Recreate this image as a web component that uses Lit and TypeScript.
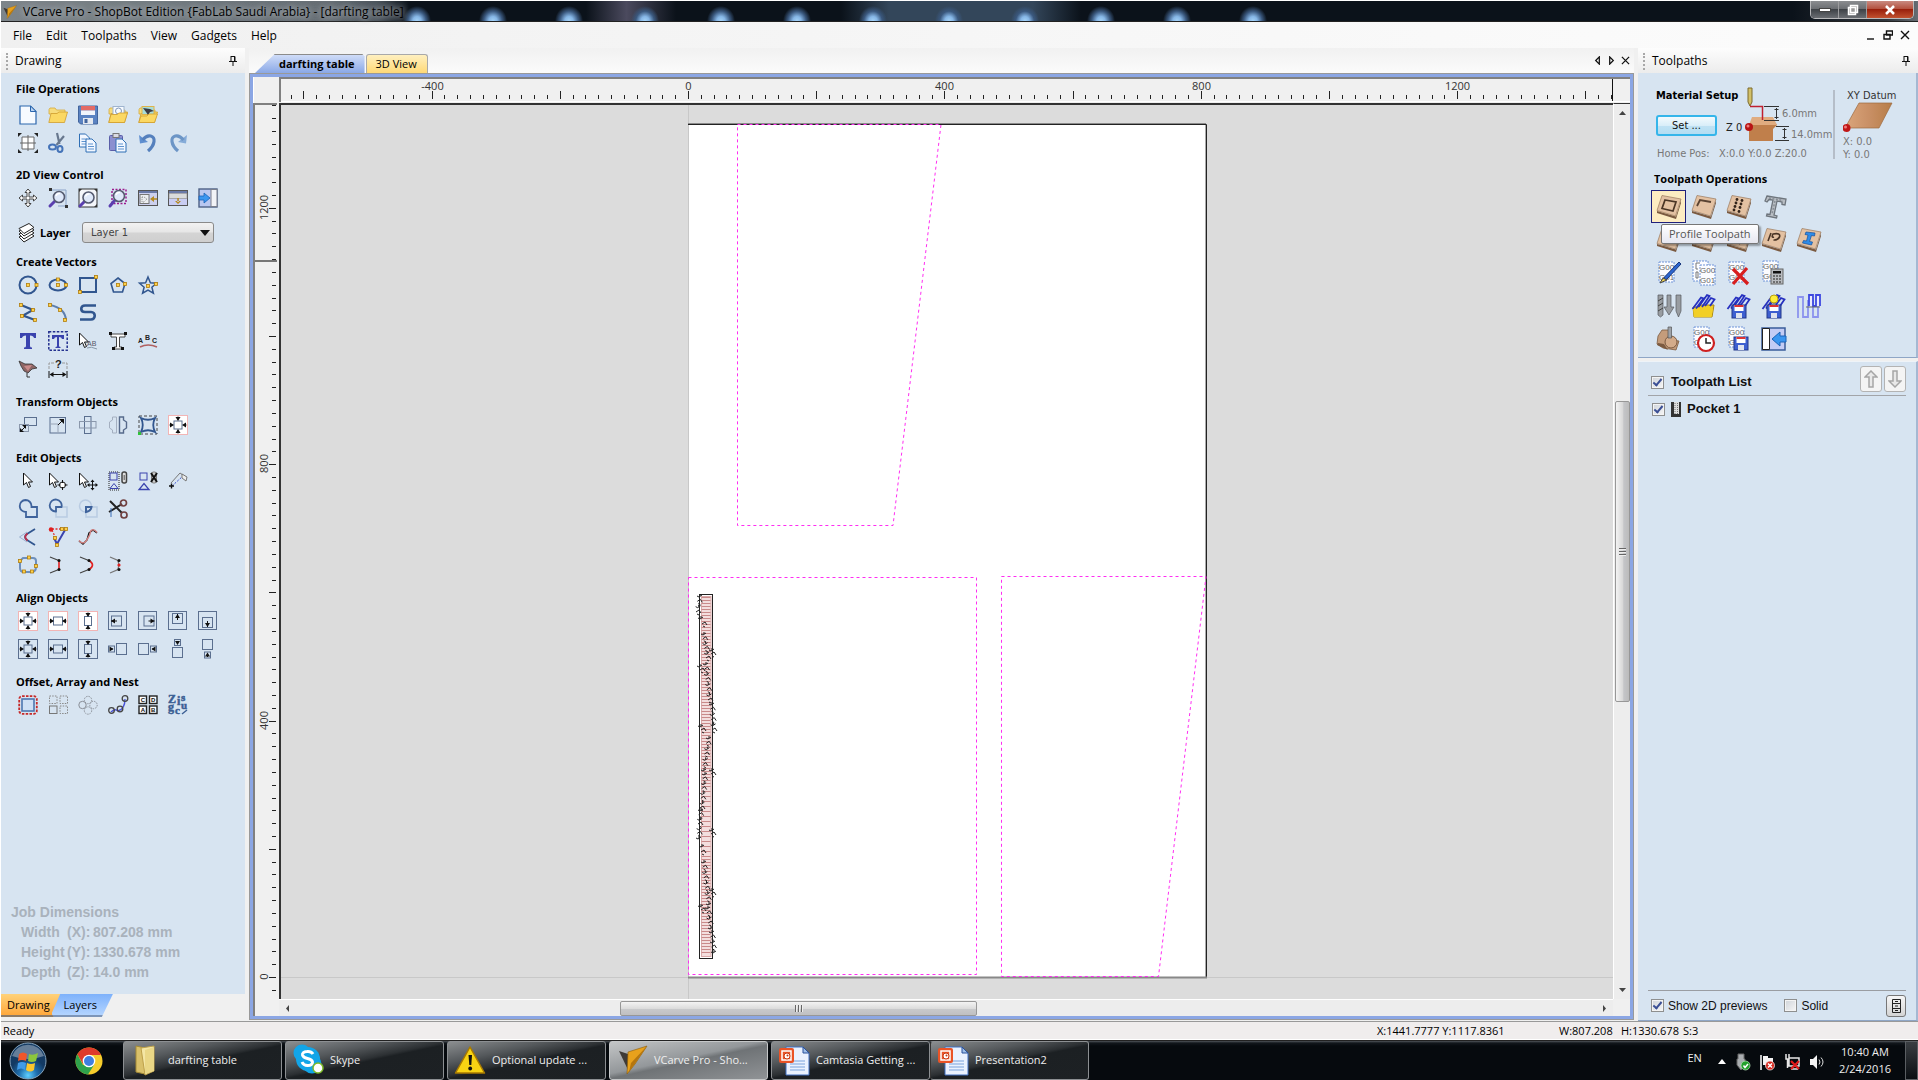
import { LitElement, html, svg, css, TemplateResult } from "lit";
import { customElement, property } from "lit/decorators.js";

type Shape = TemplateResult<2>;

/* ---------- shared drawing helpers ---------- */

const handle = (x: number, y: number): Shape =>
  svg`<rect x=${x - 1.5} y=${y - 1.5} width="3" height="3" fill="#ffd24a" stroke="#b07d10" stroke-width="0.8"/>`;

const box = (x: number, y: number, w: number, h: number, stroke = "#5b6f8f", fill = "none"): Shape =>
  svg`<rect x=${x} y=${y} width=${w} height=${h} fill=${fill} stroke=${stroke}/>`;

const head = (x: number, y: number, dir: string): Shape => {
  const d: Record<string, string> = {
    l: "l4 -2.5 v5z",
    r: "l-4 -2.5 v5z",
    u: "l-2.5 4 h5z",
    d: "l-2.5 -4 h5z",
  };
  return svg`<path d=${`M${x} ${y}${d[dir]}`} fill="#111"/>`;
};

const pointer: Shape = svg`<path d="M1.500 2v12l3-2.500 2 5 2-1-2-4.500h4z" fill="#fff" stroke="#111"/>`;

const lens = (x = 11, y = 8): Shape => svg`
  <path d=${`M${x - 4} ${y + 4}L2 18`} stroke="#5a3fb0" stroke-width="3" stroke-linecap="round"/>
  <circle cx=${x} cy=${y} r="5.500" fill="#dfe9fa" stroke="#555b70" stroke-width="1.600"/>
  <path d=${`M${x - 3} ${y - 1}a3.500 3.500 0 0 1 4-2.500`} stroke="#fff" stroke-width="1.500" fill="none"/>`;

const folder: Shape = svg`
  <path d="M1 4.500l1-1.500h5l1.500 2H17v4H1z" fill="#f7dc7c" stroke="#d6a93c" stroke-width="0.800"/>
  <path d="M0.800 17.500L3 8.500h6L11 7h8.500L16.500 17.500z" fill="#fbd863" stroke="#d09e2e" stroke-width="0.800"/>`;

const page = (x: number, y: number): Shape => svg`
  <path d=${`M${x} ${y}h6l4 4v9h-10z`} fill="#f2f7ff" stroke="#2f6fb5"/>
  <path d=${`M${x + 2} ${y + 5}h5m-5 2.500h6m-6 2.500h6`} stroke="#5f93cf"/>`;

const center = (fill: string, stroke: string, h: boolean, v: boolean): Shape => svg`
  ${box(0.5, 0.5, 19, 19, stroke, fill)}
  ${h && v ? box(6, 6, 8, 8) : h ? box(5.500, 6, 9, 8) : box(6.500, 5.500, 7, 9)}
  ${h ? svg`<path d="M1.500 10h3M15.500 10h3" stroke="#111"/>${head(6, 10, "r")}${head(14, 10, "l")}` : ""}
  ${v ? svg`<path d="M10 1.500v3M10 15.500v3" stroke="#111"/>${head(10, 6, "d")}${head(10, 14, "u")}` : ""}`;

const arrowGlyph = (x: number, y: number, dx: number, dy: number): Shape => {
  const d = dx < 0 ? "l" : dx > 0 ? "r" : dy < 0 ? "u" : "d";
  return svg`<path d=${`M${x} ${y}l${-dx * 6} ${-dy * 6}`} stroke="#111"/>${head(x, y, d)}`;
};

/* ---------- drawing panel icons, 20 x 20 ---------- */

const B = "#31568f";

const drawingIcons: Record<string, Shape> = {
  "New file": svg`<path d="M2 1h10.500L18 6.500V19H2z" fill="#f6faff" stroke="#2b66ad" stroke-width="1.200"/><path d="M12.500 1v5.500H18z" fill="#b9d3f2" stroke="#2b66ad"/>`,
  "Open file": folder,
  "Save file": svg`<path d="M0.500 1h19v18h-17l-2-2z" fill="#5b83c2" stroke="#42659d"/><rect x="3" y="1" width="14" height="4.500" fill="#e36b66"/><rect x="3" y="5.500" width="14" height="4.500" fill="#f2f5fb"/><rect x="5" y="13" width="10" height="6" fill="#e5e9f0"/><rect x="6.500" y="14" width="3" height="4" fill="#42659d"/>`,
  "Import vectors": svg`${folder}<rect x="5" y="1.500" width="11" height="8" fill="#f7fbff" stroke="#9fb4cf"/><circle cx="10.500" cy="6" r="3" fill="none" stroke="#8297b8"/><path d="M0.800 17.500L3 9.500h6L11 8h8.500L16.500 17.500z" fill="#fbd863" stroke="#d09e2e" stroke-width="0.800"/>`,
  "Import bitmap": svg`${folder}<rect x="4" y="1.500" width="12" height="8" fill="#a8dcd8" stroke="#e0b44a"/><path d="M5 3l7 1 4 2-4 1-2 3-2-3z" fill="#3b3b45"/><path d="M0.800 17.500L3 11h6l2-2h8.500L16.500 17.500z" fill="#fbd863" stroke="#d09e2e" stroke-width="0.800"/>`,
  "Job setup": svg`<rect x="4" y="4" width="12" height="12" fill="#fff"/><path d="M10 2v16M2 10h16M4 4h12v12H4z" stroke="#666" fill="none"/><path d="M0 0h4L0 4zM20 0h-4l4 4zM0 20h4l-4-4zM20 20h-4l4-4z" fill="#222"/>`,
  Cut: svg`<path d="M9 0l2.500 11M16 3L8.500 12" stroke="#68788f" stroke-width="2.200"/><ellipse cx="4.500" cy="14" rx="3.500" ry="2.500" fill="none" stroke="#4473b8" stroke-width="2"/><ellipse cx="12" cy="16" rx="2.500" ry="3" fill="none" stroke="#4473b8" stroke-width="2"/>`,
  Copy: svg`${page(1.5, 1)}${page(8, 6)}`,
  Paste: svg`<rect x="1.500" y="2.500" width="13" height="15" rx="1" fill="#8b8fd0" stroke="#5a5ea8"/><rect x="5" y="0.500" width="6" height="4" fill="#d9dae2" stroke="#777"/>${page(8, 6)}`,
  Undo: svg`<path d="M1 2l1 8.500 8-1.500z" fill="#5f8fd0"/><path d="M4.500 7C10 0 17 3 16 8.500c-.5 4-3 7-6 9.500" fill="none" stroke="#5580bd" stroke-width="3.200"/>`,
  Redo: svg`<path d="M19 2l-1 8.500-8-1.500z" fill="#85abd8"/><path d="M15.500 7C10 0 3 3 4 8.500c.5 4 3 7 6 9.500" fill="none" stroke="#6c95c6" stroke-width="3.200"/>`,
  Pan: svg`<path d="M10 1l3 3.500h-2v4.500h4.500V7L19 10l-3.500 3v-2H11v4.500h2L10 19l-3-3.500h2V11H4.500v2L1 10l3.500-3v2H9V4.500H7z" fill="#fff" stroke="#444"/>`,
  "Zoom box": svg`<path d="M3 2h15v16H10" fill="none" stroke="#8aa3c8"/><path d="M1 0h3v3H1zM17 17h3v3h-3z" fill="#333"/>${lens(11, 9)}`,
  "Zoom all": svg`<rect x="1" y="1" width="18" height="18" fill="#f4f6fa" stroke="#333"/>${lens(10.500, 9.500)}<path d="M1 1h3L1 4zM19 1h-3l3 3zM19 19h-3l3-3z" fill="#333"/>`,
  "Zoom selection": svg`<rect x="4" y="1.500" width="14" height="14" fill="none" stroke="#9b1c8e" stroke-width="1.500" stroke-dasharray="2 1.500"/>${lens(11, 8)}`,
  "Tile horizontally": svg`<rect x="0.500" y="2.500" width="19" height="15" fill="#ccd0ee" stroke="#555"/><rect x="1" y="3" width="18" height="2" fill="#6a7aa8"/><rect x="2" y="6.500" width="9" height="9" fill="#eceef0" stroke="#777"/><path d="M4 9h2l3 2-3 3H4z" fill="none" stroke="#888" stroke-dasharray="1 1"/><path d="M12 11l4-3v6zM15 10.300h4v1.500h-4z" fill="#b58a1e"/>`,
  "Tile vertically": svg`<rect x="0.500" y="2.500" width="19" height="15" fill="#c9cdf2" stroke="#555"/><rect x="1" y="3" width="18" height="2" fill="#6a7aa8"/><rect x="1" y="5.500" width="18" height="5" fill="#d9dbdc" stroke="#888" stroke-width="0.600"/><path d="M10 16l3-3H7zM9.300 10h1.500v4H9.300z" fill="#b58a1e"/>`,
  "Switch panels": svg`<rect x="1" y="1" width="18" height="18" fill="#b9c7f0" stroke="#4e6186" stroke-width="1.400"/><rect x="13" y="1.500" width="6" height="17" fill="#f2f3f7" stroke="#7a7f8c"/><path d="M1 8h5V5l6 5-6 5v-3H1z" fill="#3a96f0" stroke="#1a62b8" stroke-width="0.800"/>`,

  Circle: svg`<circle cx="10" cy="10" r="8.500" fill="none" stroke=${B} stroke-width="2"/>${handle(10, 10)}${handle(18.500, 10)}`,
  Ellipse: svg`<ellipse cx="10" cy="10" rx="8.500" ry="5.500" fill="none" stroke=${B} stroke-width="2"/>${handle(10, 10)}${handle(10, 4.500)}${handle(18, 10)}`,
  Rectangle: svg`<rect x="2" y="3" width="16" height="14" fill="none" stroke=${B} stroke-width="2"/>${handle(18, 2)}${handle(2, 17)}`,
  Polygon: svg`<path d="M10 3l7 5.500L14.500 17h-9L3 8.500z" fill="none" stroke=${B} stroke-width="1.600"/>${handle(10, 10)}${handle(17, 9)}`,
  Star: svg`<path d="M10 2l2.400 5.700 6.100.500-4.600 4 1.500 6L10 15l-5.400 3.200 1.500-6-4.600-4 6.100-.500z" fill="none" stroke=${B} stroke-width="1.500"/>${handle(10, 11)}${handle(18, 9)}`,
  Polyline: svg`<path d="M3 2l12 5L5 12.500 17 17" fill="none" stroke=${B} stroke-width="2.200"/>${handle(3, 2)}${handle(15, 7)}${handle(4, 13)}${handle(17, 17)}`,
  Arc: svg`<path d="M2 2q15 3 16 15" fill="none" stroke="#5d7fae" stroke-width="2"/>${handle(2, 2)}${handle(12, 7)}${handle(17, 17)}`,
  "Draw curve": svg`<path d="M18 2.500H7c-5 0-5 6.500 0 6.500h6c5 0 5 7.500 0 7.500H2" fill="none" stroke=${B} stroke-width="2.600"/>`,
  "Draw text": svg`<path d="M2 2h16v5h-2q-.5-2.500-4-2.500V15q0 1.500 2 1.500V18H6v-1.500q2 0 2-1.500V4.500Q4.500 4.500 4 7H2z" fill="#3a43ae"/>`,
  "Text in box": svg`<rect x="0.800" y="0.800" width="18.400" height="18.400" fill="none" stroke="#24318f" stroke-width="1.500" stroke-dasharray="2.500 1.500"/><path d="M4 4h12v4h-2q-.3-2-3-2v9q0 1 1.500 1v1h-5v-1Q9 16 9 15V6Q6.300 6 6 8H4z" fill="#3a43ae"/>`,
  "Edit text": svg`${pointer}<text x="9" y="15" font-size="7" fill="#556" font-family="Liberation Sans">AB</text><path d="M9 17q4-2 10 1" stroke="#89a" fill="none"/>`,
  "Convert text": svg`<path d="M3 3h14v3h-5.500v10H14v2H6v-2h2.500V6H3z" fill="#fff" stroke="#444"/><path d="M1 1h3v3H1zM16 1h3v3h-3zM4 16h3v3H4zM13 16h3v3h-3z" fill="#111"/>`,
  "Text on curve": svg`<g font-family="Liberation Sans" font-weight="700" font-size="7" fill="#222"><text x="0" y="12">A</text><text x="7" y="9">B</text><text x="14" y="12">C</text></g><path d="M2 16q8-4 17 0" fill="none" stroke="#b06060" stroke-width="1.500"/>`,
  "Trace bitmap": svg`<path d="M1 2l6 3h7l5 4-5 1-4 4-4-2-3-5z" fill="#8d6565" stroke="#333" stroke-width="0.800"/><path d="M6 7l8-1-4 6z" fill="#c98a8a"/><path d="M9 14v4m0 0h3" stroke="#333"/>`,
  Dimension: svg`<path d="M1 10V4h5M14 4h5v6" fill="none" stroke="#999" stroke-dasharray="3 1"/><text x="7" y="9" font-size="11" font-weight="700" font-family="Liberation Sans" fill="#222">?</text><path d="M1 12v7M19 12v7M3 15.500h14" stroke="#111"/>${head(1.500, 15.500, "l")}${head(18.500, 15.500, "r")}`,

  Move: svg`${box(6.5, 2.5, 12, 8)}<rect x="1.500" y="9.500" width="9" height="7" fill="none" stroke="#8a97ab"/><path d="M3 16l5-5" stroke="#111"/><path d="M8 10v4l-4-4zM2 17v-4l4 4z" fill="#111"/>`,
  Scale: svg`${box(2, 2.5, 15.5, 15.5)}<path d="M2 9h8v9" fill="none" stroke="#9aa6b8"/><path d="M10 10l5-5" stroke="#111"/><path d="M16 4v5l-5-5z" fill="#111"/>`,
  Rotate: svg`${box(6.5, 1.5, 6.500, 17)}<rect x="1.500" y="6.500" width="16.500" height="6.500" fill="none" stroke="#8a97ab"/>`,
  Mirror: svg`<path d="M8.500 2v16h-4v-3L1.500 13V7l3-2V2z" fill="none" stroke="#a4afc0"/><path d="M11.500 2v16h4v-3l3-2V7l-3-2V2z" fill="none" stroke="#56698a" stroke-width="1.400"/>`,
  Distort: svg`<path d="M1 1h18v18H1z" fill="none" stroke="#444" stroke-dasharray="3 2"/><path d="M3 3q7 3.500 14 0-3.500 7 0 14-7-3.500-14 0 3.500-7 0-14z" fill="none" stroke=${B} stroke-width="1.800"/><rect x="0" y="17" width="3" height="3" fill="#2fc23a"/>`,
  "Align centre": center("#fff", "#f2b5b5", true, true),

  Select: svg`<g transform="translate(4 0)">${pointer}</g>`,
  "Node edit": svg`${pointer}<circle cx="14.500" cy="14" r="3" fill="#fff" stroke="#111"/><path d="M14.500 9v3m0 4v3M9.500 14h3m4 0h3" stroke="#111"/>`,
  "Transform mode": svg`${pointer}<path d="M14.500 9.500v9M10 14h9" stroke="#111"/><path d="M14.500 8.500l2 2.500h-4zM14.500 19.500l2-2.500h-4zM9 14l2.500-2v4zM20 14l-2.500-2v4z" fill="#111"/>`,
  Group: svg`<rect x="1" y="1" width="10" height="18" fill="none" stroke="#222" stroke-dasharray="1 1"/>${box(2, 2, 7, 7, "#3a43ae")}<path d="M2 17.500h8l-4-5z" fill="none" stroke="#3a43ae"/><rect x="14" y="1" width="4.500" height="11" rx="2" fill="#ddd" stroke="#444" stroke-width="1.500"/><path d="M16.200 4v5" stroke="#555"/>`,
  Ungroup: svg`${box(2, 2, 7, 7, "#3a43ae")}<path d="M1 18.500h10l-5-6z" fill="none" stroke="#3a43ae" stroke-width="1.300"/><rect x="13.500" y="1" width="5" height="11" rx="2" fill="#ccc" stroke="#777"/><path d="M13 2l6 9M19 2l-6 9" stroke="#111" stroke-width="2"/>`,
  Measure: svg`<path d="M3 12l9-10 6 4" fill="none" stroke="#777"/><path d="M4 15L15 5" stroke="#3a4fd0" stroke-dasharray="2 1.500"/><path d="M1 15h5M3.500 12.500v5" stroke="#111" stroke-width="1.400"/><path d="M14 3l5 3-1 4-4-3z" fill="#eee" stroke="#777"/>`,
  Weld: svg`<path d="M7.500 1a6 6 0 0 1 6 6v1h5.500v10H8v-5A6 6 0 1 1 7.500 1z" fill="none" stroke="#3f639c" stroke-width="1.800"/>`,
  Subtract: svg`<rect x="8" y="8" width="11" height="10" fill="none" stroke="#b9cbe2" stroke-width="1.500"/><path d="M8 12.500A6 6 0 1 1 13.500 8H8z" fill="none" stroke="#3f639c" stroke-width="1.800"/>`,
  Intersect: svg`<circle cx="7.500" cy="7" r="6" fill="none" stroke="#b9cbe2" stroke-width="1.500"/><rect x="8" y="8" width="11" height="10" fill="none" stroke="#b9cbe2" stroke-width="1.500"/><path d="M8 8h5.500Q13 12 8 13z" fill="none" stroke="#3f639c" stroke-width="2"/>`,
  Trim: svg`<path d="M2 2l12 12M1 13l13-8" stroke="#222" stroke-width="2"/><circle cx="15.500" cy="4" r="3" fill="none" stroke="#704040" stroke-width="1.700"/><circle cx="16" cy="16" r="3" fill="none" stroke="#704040" stroke-width="1.700"/><path d="M3 9v9" stroke="#3a6fb8"/>`,
  Fillet: svg`<path d="M9 5L1.500 10 9 15" fill="none" stroke="#9bb0cf"/><path d="M17 2L9 7q-4 3 0 6l8 5" fill="none" stroke=${B} stroke-width="1.800"/><path d="M9.500 6.500q-4.500 3.500 0 7" fill="none" stroke="#c0304a" stroke-width="1.800"/>`,
  Extend: svg`<path d="M4 2h12M4 3l4 9" fill="none" stroke="#e03030" stroke-dasharray="2 1.500" stroke-width="1.300"/><path d="M17 3L9 17l-3-6" fill="none" stroke="#3a43ae" stroke-width="2"/><circle cx="3" cy="2.500" r="2.200" fill="#e02020"/>${handle(14, 2)}${handle(18, 2)}${handle(7, 11)}${handle(9, 18)}`,
  "Fit curves": svg`<path d="M1 14l4 3 4-4 2-7 4-3 4 3" fill="none" stroke="#111" stroke-width="1.400"/><path d="M1 13.500q4 5 7.500 0T13 3.500q3-2 6 2" fill="none" stroke="#d08080" stroke-width="1.400"/>`,
  "Close vector": svg`<path d="M5 3h10q3 0 3 3v6q0 5-5 5H6q-4 0-4-4V6z" fill="none" stroke="#6e90bd" stroke-width="2"/>${handle(2, 6)}${handle(11, 2.500)}${handle(18, 11)}${handle(6, 16.500)}${handle(14, 16.500)}`,
  "Join line": svg`<path d="M2 2l10 4M2 18l10-4" stroke="#444" stroke-width="1.300"/><path d="M11 6v8" stroke="#e02020" stroke-width="1.600"/><circle cx="11" cy="5.500" r="1.500" fill="#111"/><circle cx="11" cy="14.500" r="1.500" fill="#111"/>`,
  "Join curve": svg`<path d="M2 2l10 4M2 18l10-4" stroke="#444" stroke-width="1.300"/><path d="M11 5.500q7 4.500 0 9" fill="none" stroke="#e02020" stroke-width="1.600"/><circle cx="11" cy="5.500" r="1.500" fill="#111"/><circle cx="11" cy="14.500" r="1.500" fill="#111"/>`,
  "Join point": svg`<path d="M2 2l8 3.500 1 4.500-1 4.500L2 18" stroke="#777" fill="none" stroke-width="1.300"/><circle cx="11" cy="5.500" r="1.500" fill="#111"/><circle cx="11" cy="10" r="1.600" fill="#e02020"/><circle cx="11" cy="14.500" r="1.500" fill="#111"/>`,

  "Centre in material": center("#fff", "#f2b5b5", true, true),
  "Centre across": center("#fff", "#f2b5b5", true, false),
  "Centre up": center("#fff", "#f2b5b5", false, true),
  "Align left inside": svg`${box(0.5, 0.5, 18, 18)}${box(3.500, 5, 10, 10)}${arrowGlyph(3, 10, -1, 0)}`,
  "Align right inside": svg`${box(0.5, 0.5, 18, 18)}${box(6, 5, 10, 10)}${arrowGlyph(16.500, 10, 1, 0)}`,
  "Align top inside": svg`${box(0.5, 0.5, 18, 18)}${box(4.500, 2.500, 10, 10)}${arrowGlyph(9.500, 3, 0, -1)}`,
  "Align bottom inside": svg`${box(0.5, 0.5, 18, 18)}${box(4.500, 6.500, 10, 10)}${arrowGlyph(9.500, 16, 0, 1)}`,
  "Centre on selection": center("none", "#5b6f8f", true, true),
  "Centre across selection": center("none", "#5b6f8f", true, false),
  "Centre up selection": center("none", "#5b6f8f", false, true),
  "Align outside left": svg`${box(0.5, 7, 6, 6)}${box(8.500, 4.500, 10, 11)}<path d="M2 10h3" stroke="#111"/>${head(5.500, 10, "r")}`,
  "Align outside right": svg`${box(12.500, 7, 6, 6)}${box(0.5, 4.500, 10, 11)}<path d="M14 10h3" stroke="#111"/>${head(13.500, 10, "l")}`,
  "Align outside top": svg`${box(6.500, 0.500, 6, 6)}${box(4.500, 8.500, 10, 10)}<path d="M9.500 2v3" stroke="#111"/>${head(9.500, 6, "d")}`,
  "Align outside bottom": svg`${box(6.500, 13, 6, 6)}${box(4.500, 0.500, 10, 10)}<path d="M9.500 15v3" stroke="#111"/>${head(9.500, 13.500, "u")}`,

  Offset: svg`<rect x="1.200" y="1.200" width="17.600" height="17.600" rx="3" fill="none" stroke="#c62828" stroke-width="1.800" stroke-dasharray="2.500 1.300"/><rect x="4" y="4" width="12" height="12" fill="#cfe0f5" stroke="#4d76b0" stroke-width="1.600"/>`,
  "Array copy": svg`<g fill="none" stroke="#888" stroke-dasharray="1.500 1.200"><rect x="1.500" y="1" width="7.500" height="7.500"/><rect x="12" y="1" width="7.500" height="7.500"/><rect x="12" y="11" width="7.500" height="7.500"/></g>${box(1.500, 11, 7.500, 7.500, "#777")}`,
  "Circular copy": svg`<circle cx="4.500" cy="10" r="3.700" fill="none" stroke="#8a8f98"/><g fill="none" stroke="#8a8f98" stroke-dasharray="1.500 1"><circle cx="10" cy="5" r="3.700"/><circle cx="15.500" cy="10" r="3.700"/><circle cx="10" cy="15.500" r="3.700"/></g>`,
  "Copy along vector": svg`<path d="M3 17q4-4 7-1 7-2 7-12" fill="none" stroke="#4a52d8" stroke-width="1.400"/><g fill="none" stroke="#444" stroke-width="1.300"><circle cx="3.500" cy="15.500" r="2.800"/><circle cx="12" cy="14" r="2.800"/><circle cx="17" cy="3.500" r="2.800"/></g>`,
  "Plate layout": svg`<g fill="#fff" stroke="#222" stroke-width="1.400"><rect x="1" y="1" width="7.500" height="7.500"/><rect x="11.500" y="1" width="7.500" height="7.500"/><rect x="1" y="11" width="7.500" height="7.500"/><rect x="11.500" y="11" width="7.500" height="7.500"/></g><g font-size="6" font-weight="700" font-family="Liberation Sans" fill="#111"><text x="2.700" y="7">C</text><text x="13" y="7">D</text><text x="2.700" y="17">A</text><text x="13" y="17">B</text></g>`,
  Nest: svg`<g font-weight="700" font-family="Liberation Serif" fill="#3c5f94" stroke="#3c5f94" stroke-width="0.500"><text x="0" y="8" font-size="12">Z</text><text x="9" y="10" font-size="12">i</text><text x="0" y="16" font-size="12">g</text><text x="7" y="19" font-size="11">c</text><text x="13" y="6" font-size="11">s</text><text x="13" y="14" font-size="11">u</text></g><path d="M14 19l5-4" stroke="#3c5f94" stroke-width="1.500"/>`,
};

/* ---------- toolpath icons, 26 x 26 ---------- */

const plate: Shape = svg`
  <path d="M1 17l19 5.500L25 6v3L20 25 1 19z" fill="#7b5a40"/>
  <path d="M6 1.500L25 5 19.500 22 1 16.500z" fill="#e3c1a2" stroke="#9a795c" stroke-width="0.700"/>`;

const blankSheet = (x: number, y: number): Shape =>
  svg`<rect x=${x} y=${y} width="15" height="20" fill="#fbfcff" stroke="#6f93d8" stroke-dasharray="2 1"/>`;

const sheet = (x: number, y: number): Shape => svg`
  ${blankSheet(x, y)}
  <g font-size="8" fill="#666" font-family="Liberation Sans"><text x=${x} y=${y + 8}>G00</text><text x=${x} y=${y + 18}>G01</text></g>`;

const disk = (x: number, y: number): Shape => svg`
  <rect x=${x} y=${y} width="14" height="13" fill="#3e5fd0" stroke="#22368a"/>
  <rect x=${x + 2.5} y=${y} width="9" height="6" fill="#fff"/><rect x=${x + 2.5} y=${y} width="9" height="2" fill="#d33"/>
  <rect x=${x + 4} y=${y + 8} width="6" height="5" fill="#dfe3ee"/>`;

const coil: Shape = svg`<path d="M1.500 16L10 4.500l2.500 1L5 15.500M7.500 14L16 2l2.500 1-7.500 11M14 13l6-8 3.500 1.500L19 13" fill="none" stroke="#2630c0" stroke-width="1.800"/>`;

const toolIcons: Record<string, Shape> = {
  "Profile Toolpath": svg`${plate}<path d="M9 6l11 2-3 9-11-2.500z" fill="none" stroke="#4a3526" stroke-width="1.700"/>`,
  "Pocket Toolpath": svg`${plate}<path d="M6 12l3-6 11 2" fill="none" stroke="#5a4332" stroke-width="1.800"/>`,
  "Drilling Toolpath": svg`${plate}<g fill="#33241a"><circle cx="11" cy="5.500" r="1.400"/><circle cx="16" cy="6.500" r="1.400"/><circle cx="10" cy="9" r="1.400"/><circle cx="15" cy="10" r="1.400"/><circle cx="9" cy="12.500" r="1.400"/><circle cx="14" cy="13.500" r="1.400"/><circle cx="8" cy="16" r="1.400"/><circle cx="13" cy="17.500" r="1.400"/></g>`,
  "Quick Engrave": svg`<path d="M6 2l19 3-1 6-3-.500v-2.500l-5-1-3 14 3 1-.500 2-10-2 .500-2 3 .500L12 6 8 5.500 6 8 4 7z" fill="#b9bec4" stroke="#6e757d" stroke-width="1.300"/><path d="M8 4l14 2.500M14 7l-3 13" stroke="#868d95" stroke-dasharray="2 1.500" stroke-width="1.500"/>`,
  "Inlay Toolpath": svg`${plate}`,
  "V-Carve Toolpath": svg`${plate}<path d="M6 14l6-7 6 9" fill="none" stroke="#4a3526" stroke-width="2"/>`,
  "Fluting Toolpath": svg`${plate}<path d="M8 15l4-9M13 17l4-9" stroke="#4a3526" stroke-width="2"/>`,
  "Texture Toolpath": svg`${plate}<path d="M7 14l3-8M13 10q-3 1-1-3 8-1.500 6.500 3-2 3.500-6 3" fill="none" stroke="#4a3526" stroke-width="1.600"/>`,
  "Prism Carving": svg`${plate}<path d="M10 5l9 1-.500 3-3-.500-2 6 3 .500-1 3-9-2 1-2.500 3 .500 1.500-6-3-.500z" fill="#2e8be8" stroke="#15509c" stroke-width="0.700"/>`,
  "Edit Toolpath": svg`${sheet(3, 2)}<path d="M23 2l2 2L11 19l-4 2 1.500-4z" fill="#2c66d0" stroke="#17357c"/><path d="M4 23l3-5 4 2z" fill="#e8cf53" stroke="#444"/>`,
  "Duplicate Toolpath": svg`${blankSheet(2, 1)}<path d="M9 3H5v6h2M5 12h2v6H5z" stroke="#777" fill="none"/>${sheet(9, 5)}`,
  "Delete Toolpath": svg`${sheet(3, 2)}<path d="M7 9l15 15M21 8L7 24" stroke="#d81e1e" stroke-width="3.200"/>`,
  "Recalculate Toolpaths": svg`${sheet(2, 1)}<rect x="10" y="9" width="12" height="15" fill="#b9bcc0" stroke="#666"/><rect x="12" y="11" width="8" height="2.500" fill="#111"/><path d="M12 16h8M12 19h8M12 22h8" stroke="#555" stroke-width="1.500" stroke-dasharray="2 1"/>`,
  "Tool Database": svg`<g fill="#999da2" stroke="#55585d" stroke-width="0.700"><path d="M2 2h5v20l-2.500 2L2 22zM11 2h4v12h3l-5 8-5-8h3zM20 2h5v16l-2.500 6-2.500-6z"/></g><path d="M2 8l5-3M2 13l5-3M2 18l5-3" stroke="#444"/>`,
  "Load Template": svg`<path d="M2 14h6l2-2h13l-2 12H3z" fill="#f2cf26" stroke="#a98710"/>${coil}<path d="M2 16h20l-1.500 8H3z" fill="#f2cf26"/>`,
  "Save Template": svg`${coil}${disk(6, 12)}`,
  "Save Visible Template": svg`${coil}${disk(6, 12)}<circle cx="13" cy="6" r="4" fill="#ffee3a" stroke="#b8a010"/><path d="M11.500 10h3v2h-3z" fill="#888"/>`,
  "Merge Toolpaths": svg`<path d="M2 25V4h5v20h5V8h5v16h5V10" fill="none" stroke="#8c93ee" stroke-width="1.800"/><path d="M13 13V2h4v11h3V2h4v11" fill="#e9eafd" stroke="#3d47e0" stroke-width="1.800"/><path d="M10 14h14" stroke="#666"/>`,
  "Preview Toolpaths": svg`<path d="M2 10l4-6h8v10l9 1-3 9-13-2-6-4z" fill="#c49c7b" stroke="#7b5a40" stroke-width="0.800"/><path d="M2 17l6 1 4 6-11-5z" fill="#7b5a40"/><circle cx="15" cy="16" r="6" fill="#d3ab8a" stroke="#7b5a40"/><path d="M12 1h3.500v11H12z" fill="#9ea2a7" stroke="#555" stroke-width="0.700"/>`,
  "Estimate Time": svg`${sheet(3, 1)}<circle cx="15" cy="17" r="8" fill="#fff" stroke="#cf1f1f" stroke-width="2.200"/><path d="M15 12v5h5" fill="none" stroke="#222" stroke-width="1.500"/>`,
  "Save Toolpath": svg`${sheet(3, 1)}${disk(8, 11)}`,
  "Switch Side": svg`<rect x="1" y="2" width="23" height="22" fill="#c3ccf5" stroke="#3a5c9a" stroke-width="1.500"/><path d="M1.500 2.500h7v21h-7z" fill="#fff" stroke="#222"/><path d="M25 10h-6V6l-8 7 8 7v-4h6z" fill="#3a96f0" stroke="#1a62b8"/>`,
};

/* ---------- taskbar icons, 32 x 32 ---------- */

const vLogo: Shape = svg`<path d="M3 7l9 3 3 9-2 9z" fill="#3e3a36"/><path d="M31 2L12 8l-1 22 8-10z" fill="#e8a11c" stroke="#8a5a08" stroke-width="0.600"/><path d="M31 2L15 19l-2 9z" fill="#b5760f"/>`;
const powerpoint: Shape = svg`
  <path d="M8 3h17l6 6v22H8z" fill="#eaf2ff" stroke="#3f6fc0"/><path d="M25 3v6h6z" fill="#9fbfe8" stroke="#28509c"/>
  <path d="M12 17h15M12 20h15M12 23h15M12 26h15" stroke="#7ba3dc"/>
  <rect x="1" y="4" width="15" height="15" rx="2" fill="#ea5427"/><path d="M4 7h9v9H4z" fill="none" stroke="#fff" stroke-width="1.500"/>
  <circle cx="9" cy="12" r="3" fill="#fff" stroke="#c93a12"/><circle cx="9.500" cy="11.500" r="1" fill="#c93a12"/>`;

const taskIcons: Record<string, Shape> = {
  folder: svg`<path d="M6 2l9 2v26l-9-2z" fill="#d9c06a" stroke="#a68b35"/><path d="M11 4l13-2v25l-9 4z" fill="#f4e6a4" stroke="#bda04a"/><path d="M15 6l9-3v24l-9 3z" fill="#ead786"/>`,
  skype: svg`<circle cx="10" cy="9" r="8.500" fill="#12a5e8"/><circle cx="20" cy="20" r="9.500" fill="#12a5e8"/><circle cx="16" cy="15" r="12" fill="#12a5e8"/><path d="M21 10q-2-3-6-2.500-5 .500-4.500 3.500.500 2.500 5 3.500t5 3.500q0 3.500-5 3.500-4 0-5.500-3.500" fill="none" stroke="#fff" stroke-width="3"/><circle cx="26" cy="24" r="5" fill="#fff" stroke="#7dba28" stroke-width="1.500"/>`,
  warning: svg`<path d="M16 3l14.500 26H1.500z" fill="#f8d313" stroke="#a87a00" stroke-width="1.500" stroke-linejoin="round"/><path d="M14.500 11h3.500l-.700 10h-2z" fill="#111"/><circle cx="16.200" cy="24.500" r="1.900" fill="#111"/>`,
  vcarve: vLogo,
  powerpoint,
};

/* ---------- elements ---------- */

@customElement("icon-bar")
class IconBar extends LitElement {
  @property({ attribute: false }) names: string[] = [];
  @property({ attribute: false }) icons: Record<string, Shape> = {};
  @property({ type: Boolean, reflect: true }) large = false;
  @property() active = "";

  static styles = css`
    :host { display: flex; }
    button { appearance: none; border: 1px solid transparent; background: none; padding: 0; margin: 0; width: 30px; height: 28px; display: grid; place-items: center; box-sizing: border-box; }
    svg { width: 20px; height: 20px; overflow: visible; }
    :host([large]) button { width: 35px; height: 33px; }
    :host([large]) svg { width: 26px; height: 26px; }
    button.on { background: #fdecc2; border-color: #20207a; }
  `;

  render() {
    const view = this.large ? "0 0 26 26" : "0 0 20 20";
    return this.names.map(
      (n) => html`<button type="button" aria-label=${n} class=${n === this.active ? "on" : ""}>
        <svg viewBox=${view} fill="none" aria-hidden="true">${this.icons[n]}</svg>
      </button>`
    );
  }
}

const MM = 0.641;
const ORIGIN_X = 409;
const ORIGIN_Y = 874;

@customElement("design-view")
class DesignView extends LitElement {
  static styles = css`
    :host { display: grid; grid-template-columns: 26px minmax(0, 1fr) 17px; grid-template-rows: 26px minmax(0, 1fr) 17px; background: #f0f0f0; overflow: hidden; }
    .corner { border-left: 1px solid #fff; }
    .top { grid-column: 2 / 4; display: flex; border: 2px solid #808080; border-width: 2px 0 0 2px; box-shadow: inset 0 -1px #fff; margin-bottom: 1px; }
    .side { grid-row: 2 / 4; display: flex; border: 2px solid #808080; border-width: 2px 0 0 2px; margin: 0 2px 0 0; overflow: hidden; }
    .sheet { display: flex; overflow: hidden; background: #dcdcdc; }
    svg { flex: 1; min-width: 0; min-height: 0; display: block; overflow: hidden; }
    .top svg { overflow: visible; }
    text { font: 11px "Open Sans", sans-serif; fill: #333; text-anchor: middle; }
    .vbar, .hbar { display: flex; align-items: center; background: #ededed; }
    .vbar { flex-direction: column; border-left: 1px solid #fff; border-top: 1px solid #333; }
    .hbar { border-top: 1px solid #fff; }
    .arrow { appearance: none; border: 0; padding: 0; background: none; width: 17px; height: 17px; flex: none; display: grid; place-items: center; }
    .arrow svg { width: 7px; height: 7px; flex: none; }
    .thumb { box-sizing: border-box; border: 1px solid #979797; border-radius: 2px; display: flex; align-items: center; justify-content: center; gap: 1px; }
    .vbar .track, .hbar .track { flex: 1; display: flex; min-width: 0; min-height: 0; }
    .vbar .track { flex-direction: column; }
    .vbar .thumb { width: 15px; height: 35%; margin-top: 280px; flex-direction: column; background: linear-gradient(90deg, #f3f3f3, #d9d9d9 50%, #c4c5c8 60%, #bbb); }
    .hbar .thumb { height: 15px; width: 357px; margin-left: 324px; background: linear-gradient(#f3f3f3, #dcdcdc 50%, #c8c9cb 55%, #c0c0c2); }
    .vbar i { width: 7px; height: 2px; background: #666; border-bottom: 1px solid #eee; box-sizing: border-box; }
    .hbar i { height: 7px; width: 2px; background: #666; border-right: 1px solid #eee; box-sizing: border-box; }
  `;

  private ticks(from: number, to: number): number[] {
    const out: number[] = [];
    for (let v = from; v <= to; v += 20) out.push(v);
    return out;
  }

  private topRuler() {
    return this.ticks(-620, 1440).map((v) => {
      const x = Math.round(ORIGIN_X - 2 + v * MM) + 0.5;
      const len = v % 200 === 0 ? 8 : 4;
      return svg`<path d=${`M${x} ${20}v${-len}`} stroke="#222"/>
        ${v % 400 === 0 ? svg`<text x=${x} y="11">${v}</text>` : ""}`;
    });
  }

  private sideRuler() {
    return this.ticks(-20, 1360).map((v) => {
      const y = Math.round(ORIGIN_Y - 2 - v * MM) + 0.5;
      const len = v % 200 === 0 ? 7 : 4;
      return svg`<path d=${`M21 ${y}h${-len}`} stroke="#222"/>
        ${v % 400 === 0 ? svg`<text transform=${`translate(13 ${y - 1}) rotate(-90)`}>${v}</text>` : ""}`;
    });
  }

  private marks() {
    const runs: [number, number, number, number][] = [
      [0, 2, -2, 18], [1, 24, 4, 30], [4, 40, 8, 64], [6, 70, 10, 106], [12, 110, 14, 136],
      [0, 72, 2, 76], [1, 132, 3, 136], [9, 144, 4, 176], [5, 180, 2, 214],
      [1, 216, -1, 244], [2, 252, 3, 258], [4, 268, 9, 310], [8, 314, 11, 334], [12, 338, 14, 358],
      [12, 56, 13, 60], [12, 176, 13, 180], [12, 236, 13, 240], [12, 296, 13, 300], [1, 312, 3, 316],
    ];
    let d = "";
    runs.forEach(([x0, y0, x1, y1]) => {
      const n = Math.max(1, Math.round((y1 - y0) / 5));
      for (let i = 0; i <= n; i++) {
        const x = x0 + ((x1 - x0) * i) / n;
        const y = y0 + ((y1 - y0) * i) / n;
        d += i % 2 ? `M${x - 1} ${y}l3-2 2 3M${x} ${y + 2}l2 1` : `M${x - 2} ${y}l2 1 3-2M${x + 1} ${y - 2}v2`;
      }
    });
    return svg`<path d=${d} fill="none" stroke="#222" stroke-width="1"/>`;
  }

  private pocket() {
    const lines: Shape[] = [];
    for (let y = 4; y < 362; y += y > 190 && y < 260 ? 5 : 3) lines.push(svg`<path d=${`M2.500 ${y - 0.5}h9`} stroke="#c98a8a"/>`);
    return svg`<g transform="translate(11 -383)">
      <rect x="0.500" y="0.500" width="13" height="364" fill="#fff" stroke="#222"/>
      <rect x="2.500" y="2.500" width="9.500" height="360" fill="#f3dede" stroke="#d9aaaa"/>
      ${lines}${this.marks()}</g>`;
  }

  render() {
    const grip = html`<i></i><i></i><i></i>`;
    const arrow = (label: string, d: string) =>
      html`<button type="button" class="arrow" aria-label=${label}><svg viewBox="0 0 7 7"><path d=${d} fill="#444" /></svg></button>`;
    return html`
      <div class="corner"></div>
      <div class="top"><svg>${this.topRuler()}<path d="M1331.500 0v22" stroke="#111" /></svg></div>
      <div class="side"><svg>${this.sideRuler()}<path d="M0 156h22" stroke="#777" stroke-width="2" /></svg></div>
      <div class="sheet">
        <svg>
          <path d="M409.500 0v900" stroke="#c8c8c8" />
          <g transform="translate(${ORIGIN_X} ${ORIGIN_Y})">
            <rect x="1" y="-853" width="517" height="853" fill="#fff" />
            <path d="M0 -853.500h518" fill="none" stroke="#8a8a8a" />
            <path d="M0 -852.500h518.500V0" fill="none" stroke="#222" />
            <path d="M517.500 -852V0" fill="none" stroke="#aaa" />
            <path d="M0 .5h519" stroke="#888" stroke-width="2" />
            <g fill="none" stroke="#ff2df2" stroke-dasharray="3 3">
              <path d="M49.500 -852.500H253L205 -451.500H49.500z" />
              <path d="M.5 -399.500H288.500v397H.5z" />
              <path d="M313.500 -400.500H518L470.500 -.5H313.500z" />
            </g>
            ${this.pocket()}
          </g>
          <path d="M0 874.500h409M928 874.500h2000" stroke="#c8c8c8" />
          <path d="M1 2000V1h4000" fill="none" stroke="#333" stroke-width="2" />
        </svg>
      </div>
      <div class="vbar">${arrow("Scroll up", "M3.500 2L7 6H0z")}<div class="track"><div class="thumb">${grip}</div></div>${arrow("Scroll down", "M3.500 5L7 1H0z")}</div>
      <div class="hbar">${arrow("Scroll left", "M2 3.500L5 0v7z")}<div class="track"><div class="thumb">${grip}</div></div>${arrow("Scroll right", "M5 3.500L2 0v7z")}</div>
    `;
  }
}

const sections: { title: string; rows: string[][] }[] = [
  { title: "File Operations", rows: [["New file", "Open file", "Save file", "Import vectors", "Import bitmap"], ["Job setup", "Cut", "Copy", "Paste", "Undo", "Redo"]] },
  { title: "2D View Control", rows: [["Pan", "Zoom box", "Zoom all", "Zoom selection", "Tile horizontally", "Tile vertically", "Switch panels"]] },
  { title: "Create Vectors", rows: [["Circle", "Ellipse", "Rectangle", "Polygon", "Star"], ["Polyline", "Arc", "Draw curve"], ["Draw text", "Text in box", "Edit text", "Convert text", "Text on curve"], ["Trace bitmap", "Dimension"]] },
  { title: "Transform Objects", rows: [["Move", "Scale", "Rotate", "Mirror", "Distort", "Align centre"]] },
  { title: "Edit Objects", rows: [["Select", "Node edit", "Transform mode", "Group", "Ungroup", "Measure"], ["Weld", "Subtract", "Intersect", "Trim"], ["Fillet", "Extend", "Fit curves"], ["Close vector", "Join line", "Join curve", "Join point"]] },
  { title: "Align Objects", rows: [["Centre in material", "Centre across", "Centre up", "Align left inside", "Align right inside", "Align top inside", "Align bottom inside"], ["Centre on selection", "Centre across selection", "Centre up selection", "Align outside left", "Align outside right", "Align outside top", "Align outside bottom"]] },
  { title: "Offset, Array and Nest", rows: [["Offset", "Array copy", "Circular copy", "Copy along vector", "Plate layout", "Nest"]] },
];

const toolRows: string[][] = [
  ["Profile Toolpath", "Pocket Toolpath", "Drilling Toolpath", "Quick Engrave"],
  ["Inlay Toolpath", "V-Carve Toolpath", "Fluting Toolpath", "Texture Toolpath", "Prism Carving"],
  ["Edit Toolpath", "Duplicate Toolpath", "Delete Toolpath", "Recalculate Toolpaths"],
  ["Tool Database", "Load Template", "Save Template", "Save Visible Template", "Merge Toolpaths"],
  ["Preview Toolpaths", "Estimate Time", "Save Toolpath", "Switch Side"],
];

const pin = html`<button type="button" class="pin" aria-label="Auto hide"><svg width="8" height="10" viewBox="0 0 8 10"><path d="M2 0.500h4v5M2 0v5.500M0 5.500h8M4 6v4M5.500 1v4" stroke="#111" fill="none" /></svg></button>`;

@customElement("app-root")
class AppRoot extends LitElement {
  static styles = css`
    :host { display: flex; flex-direction: column; min-height: 100vh; box-sizing: border-box; padding: 1px 0 0 1px; background: #fff; overflow: hidden; font: 11px/16px "Open Sans", "Liberation Sans", sans-serif; color: #000; cursor: default; }
    button, select, input { font: inherit; color: inherit; margin: 0; }
    button { appearance: none; border: 0; padding: 0; background: none; white-space: nowrap; }
    h1, h2, h3, p { margin: 0; font-size: inherit; font-weight: inherit; }

    .title { position: relative; height: 21px; flex: none; display: flex; align-items: center; gap: 6px; padding-left: 2px; border-bottom: 1px solid #222; box-sizing: border-box; background-color: #0b121a; background-image: linear-gradient(90deg, #7d858a, #656c72 330px, #4a525a 376px, transparent 408px), radial-gradient(ellipse 14px 15px at 40px 20px, #a5d3f8, #86b6e6 30%, #3a587e 65%, transparent), linear-gradient(90deg, transparent, #4b4a5e 45%, transparent), linear-gradient(90deg, transparent, #33465a 20% 80%, transparent); background-size: 410px 100%, 76px 100%, 90px 100%, 240px 100%; background-repeat: no-repeat, repeat-x, no-repeat, no-repeat; background-position: 0 0, 376px 0, 585px 0, 840px 0; }
    .title::before { content: ""; flex: 1; order: 2; }
    .shade { order: 3; position: absolute; left: 1290px; right: 0; top: 0; bottom: 0; background: linear-gradient(90deg, #0b121a 80%, #30363d 95%, #676d73); }
    .title h1 { font-size: 12px; padding-top: 2px; text-shadow: 0 0 6px #b9bfc4, 0 0 8px #aab0b6; white-space: nowrap; }
    .title > svg { margin-top: 2px; }
    .caps { order: 4; position: relative; display: flex; align-self: flex-start; height: 17px; margin-right: 4px; border: 1px solid #b9b9bb; border-top: 0; border-radius: 0 0 5px 5px; overflow: hidden; }
    .caps button { width: 28px; display: grid; place-items: center; border-right: 1px solid #9c9c9e; background: linear-gradient(#8b8d90, #6c6f73 45%, #3e4247 50%, #6a6d72); }
    .caps .close { width: 46px; border: 0; background: linear-gradient(#c98a80, #b4523f 45%, #99200c 50%, #c1512f); }

    .menu { height: 26px; flex: none; display: flex; align-items: center; gap: 14px; padding: 1px 8px 0 12px; box-sizing: border-box; font-size: 12px; background: linear-gradient(90deg, #f0f0f0, #fcfcfc); }
    .menu .mdi { margin-left: auto; display: flex; gap: 7px; align-items: center; }

    main { flex: 1; display: grid; grid-template-columns: 244px minmax(0, 1fr) 280px; gap: 4px; background: #f0f0f0; min-height: 0; }
    .dock { display: flex; flex-direction: column; min-height: 0; }
    .dockhead { height: 25px; flex: none; display: flex; align-items: center; padding: 0 8px 0 14px; font-size: 12px; background: linear-gradient(#fdfdfd, #ececec); position: relative; }
    .dockhead::before { content: ""; position: absolute; left: 5px; top: 5px; bottom: 3px; border-left: 2px dotted #a8a8a8; }
    .dockhead .pin { margin-left: auto; display: grid; }

    .tools { flex: 1; background: #d7e4f1; padding: 7px 0 0 12px; display: flex; flex-direction: column; }
    .tools h3 { height: 18px; line-height: 18px; font-weight: 700; padding-left: 3px; white-space: nowrap; }
    .group { margin-bottom: 10px; }
    .group:first-of-type { margin-bottom: 9px; }
    .group:first-of-type h3 { margin-bottom: 3px; }
    .layer { height: 31px; display: flex; align-items: center; gap: 5px; padding: 10px 0 0 5px; box-sizing: border-box; font-weight: 700; }
    .layer label { width: 37px; }
    .pick { position: relative; display: flex; }
    .pick select { appearance: none; width: 132px; height: 21px; border: 1px solid #8a8a8a; border-radius: 3px; padding: 0 8px; background: linear-gradient(#f2f2f2, #e6e6e6 48%, #d4d4d4 52%, #cfcfcf); font: 11px "DejaVu Sans Condensed", "DejaVu Sans", sans-serif; color: #444; }
    .pick svg { position: absolute; right: 4px; top: 8px; pointer-events: none; }

    .job { margin: auto 0 12px -2px; font: 700 14px/20px "Liberation Sans", sans-serif; color: #a9b2bc; white-space: nowrap; }
    .job h3 { font: inherit; height: 20px; line-height: 20px; padding-left: 0; }
    .job dl { margin: 0 0 0 10px; display: grid; grid-template-columns: 46px 26px 1fr; }
    .job dt, .job dd { margin: 0; }
    .job dt { display: contents; }
    .docktabs { height: 27px; flex: none; display: flex; align-items: flex-start; }
    .docktabs button { height: 23px; padding: 0 14px 0 6px; border-bottom: 2px solid #8d7b67; background: linear-gradient(#ffd27a, #ffa83c); clip-path: polygon(0 0, 100% 0, 86% 100%, 0 100%); }
    .docktabs button + button { margin-left: -12px; padding: 0 16px 0 12px; background: linear-gradient(#7db1fb, #b3d4ff); border-color: #7d95b8; clip-path: polygon(14% 0, 100% 0, 82% 100%, 3% 100%, 0 85%); }

    .doc { display: flex; flex-direction: column; min-height: 0; min-width: 0; }
    .doctabs { height: 25px; flex: none; display: flex; align-items: flex-end; background: linear-gradient(#f1f1f1, #fbfbfb); padding: 0 4px 0 6px; }
    .doctabs .tab { height: 19px; padding: 0 10px 0 24px; font-weight: 700; background: linear-gradient(#cfdcf8, #8aa8e6); clip-path: polygon(0 100%, 18% 0, 98% 0, 100% 12%, 100% 100%); border-top: 1px solid #8b8b8b; }
    .doctabs .tab.alt { font-weight: 400; padding: 0 10px 0 9px; background: linear-gradient(#fff0c0, #ffd976); clip-path: none; border: 1px solid #a9a9a9; border-bottom: 0; border-radius: 3px 3px 0 0; margin-left: 1px; }
    .doctabs .nav { margin-left: auto; align-self: center; display: flex; gap: 5px; align-items: center; }
    .frame { flex: 1; display: grid; min-height: 0; border: 4px solid #8ba6e4; outline: 1px solid #999; outline-offset: -1px; margin-bottom: 1px; }

    .mat { background: #d7e4f1; flex: none; box-sizing: border-box; height: 285px; padding: 12px 0 0 13px; border-bottom: 1px solid #8fa6c6; border-right: 2px solid #a5b8d2; font: 11px/14px "DejaVu Sans Condensed", "DejaVu Sans", sans-serif; color: #777; }
    .setup { display: flex; height: 78px; }
    .stock { display: grid; grid-template-columns: 69px 108px; grid-template-rows: 28px 30px 16px; width: 182px; padding-left: 5px; padding-top: 1px; box-sizing: border-box; }
    .stock h3 { grid-column: 1; grid-row: 1; font-weight: 700; color: #000; white-space: nowrap; padding-top: 3px; }
    .stock svg { grid-column: 2; grid-row: 1 / 3; }
    .stock .set { grid-column: 1; grid-row: 2; width: 61px; height: 21px; margin-top: 1px; color: #111; border: 2px solid #35b5ea; border-radius: 3px; background: linear-gradient(#f3fafd, #d9eef9 50%, #bfe2f4 52%, #b4ddf2); font-size: 11px; line-height: 16px; }
    .stock p { grid-column: 1 / 3; grid-row: 3; white-space: pre; padding-left: 1px; line-height: 20px; }
    .datum { border-left: 2px solid #b5bdc8; margin: 5px 0 4px; padding-left: 8px; white-space: nowrap; }
    .datum h3 { color: #333; padding-left: 4px; line-height: 12px; }
    .datum p { line-height: 13px; }
    .datum svg { display: block; }
    .ops { position: relative; }
    .ops h3 { font: 700 11px/22px "Open Sans", sans-serif; color: #000; margin: 5px 0 0 3px; height: 22px; }
    .tip { position: absolute; left: 10px; top: 56px; padding: 0 7px; font: 11px/18px "Open Sans", sans-serif; color: #555; background: linear-gradient(#fff, #e6e7f1); border: 1px solid #767676; border-radius: 2px; box-shadow: 2px 2px 2px #0005; white-space: nowrap; }

    .list { flex: 1; margin-top: 3px; background: #d7e4f1; border-right: 2px solid #a5b8d2; border-bottom: 1px solid #8fa6c6; border-top: 1px solid #eef3f8; display: flex; flex-direction: column; padding: 1px 10px 0 10px; font: 700 13px/20px "Liberation Sans", sans-serif; color: #111; }
    .row { display: flex; align-items: center; gap: 7px; padding-left: 3px; }
    .row.first { height: 32px; border-bottom: 1px solid #a2a4a8; }
    .row.item { height: 26px; gap: 6px; padding-left: 4px; }
    .row.last { margin-top: auto; height: 29px; border-top: 1px solid #9a9da2; font-weight: 400; font-size: 12px; gap: 4px; }
    .row.last label + input { margin-left: 13px; }
    .row.first label { padding-top: 6px; }
    .row.first input { margin-top: 6px; }
    .row .move { width: 22px; height: 26px; box-sizing: border-box; border: 1px solid #b3b3b3; border-radius: 3px; background: #f4f4f4; display: grid; place-items: center; }
    .row .move + .move { margin-left: -5px; }
    .push { margin-left: auto; }
    .row .sheetbtn { width: 20px; height: 22px; border: 1px solid #777; border-radius: 3px; background: linear-gradient(#f6f6f6, #d4d4d4); display: grid; place-items: center; box-sizing: border-box; }
    input[type="checkbox"] { appearance: none; width: 13px; height: 13px; flex: none; border: 1px solid #8e8f8f; outline: 1px solid #f4f4f4; outline-offset: -2px; background: linear-gradient(135deg, #cfd4da, #f6f6f6); display: grid; place-items: center; }
    input[type="checkbox"]:checked::before { content: ""; width: 3px; height: 7px; border: solid #3b4f95; border-width: 0 2px 2px 0; transform: translateY(-1px) rotate(40deg); }

    .status { height: 19px; flex: none; display: grid; grid-template-columns: 1fr 182px 62px 62px 235px; align-items: center; background: #f0eded; border-bottom: 1px solid #fff; box-sizing: border-box; border-top: 1px solid #999; padding-left: 2px; }
    .status span { line-height: 15px; white-space: nowrap; }

    .bar { height: 40px; flex: none; display: flex; align-items: stretch; background: linear-gradient(#50555a, #12171c 2px, #060a0e 5px); border-top: 1px solid #222; box-sizing: border-box; color: #eee; }
    .bar .orb { width: 54px; display: grid; place-items: center; }
    .bar .pinned { width: 68px; display: grid; place-items: center; }
    .bar .tasks { display: flex; gap: 3px; }
    .task { width: 159px; box-sizing: border-box; display: flex; align-items: center; gap: 6px; padding: 0 0 2px 6px; border: 1px solid #8c8f92; border-radius: 3px; background: linear-gradient(168deg, #8b8e90 0, #54585b 30%, #2c3033 48%, #1c2023 52%, #1d2124); }
    .task svg { width: 32px; height: 32px; flex: none; }
    .task.on { background: linear-gradient(168deg, #c3c5c6, #93979a 45%, #6f7376 52%, #909396); border-color: #c5c7c8; }
    .task.joined { margin-left: -3px; border-left-color: #333; }
    .tray { margin-left: auto; display: flex; align-items: center; gap: 8px; }
    .tray .lang { margin: -6px 8px 0 0; }
    .tray svg { display: block; margin-top: 2px; }
    .tray time { text-align: center; line-height: 17px; margin: 0 6px 2px 5px; }
    .tray .desk { width: 13px; align-self: stretch; border: 1px solid #5a5e62; background: linear-gradient(#3a3e42, #0a0e12); }
  `;

  private tree(d: string, label: string, size = 10) {
    return html`<button type="button" aria-label=${label}><svg width=${size} height=${size} viewBox="0 0 10 10"><path d=${d} stroke="#111" fill="none" stroke-width="1.4" /></svg></button>`;
  }

  private drawingDock() {
    return html`<section class="dock">
      <div class="dockhead"><h2>Drawing</h2>${pin}</div>
      <div class="tools">
        ${sections.map(
          (s) => html`<div class="group">
            <h3>${s.title}</h3>
            ${s.rows.map((r) => html`<icon-bar .names=${r} .icons=${drawingIcons}></icon-bar>`)}
            ${s.title === "2D View Control" ? this.layerRow() : ""}
          </div>`
        )}
        <div class="job">
          <h3>Job Dimensions</h3>
          <dl>
            <dt><span>Width</span><span>(X):</span></dt><dd>807.208 mm</dd>
            <dt><span>Height</span><span>(Y):</span></dt><dd>1330.678 mm</dd>
            <dt><span>Depth</span><span>(Z):</span></dt><dd>14.0 mm</dd>
          </dl>
        </div>
      </div>
      <div class="docktabs"><button type="button">Drawing</button><button type="button">Layers</button></div>
    </section>`;
  }

  private layerRow() {
    return html`<div class="layer">
      <svg width="17" height="20" viewBox="0 0 17 20"><g fill="#fff" stroke="#222"><path d="M1 14l5 5 10-6-5-4z" /><path d="M1 11l5 5 10-6-5-4z" /><path d="M1 8l5 5 10-6-5-4z" /><path d="M1 5.500l5 5 10-6-5-4z" /></g></svg>
      <label for="layer">Layer</label>
      <span class="pick"><select id="layer"><option>Layer 1</option></select><svg width="10" height="6" viewBox="0 0 10 6"><path d="M0 0h10L5 6z" fill="#111" /></svg></span>
    </div>`;
  }

  private toolpathDock() {
    return html`<section class="dock">
      <div class="dockhead"><h2>Toolpaths</h2>${pin}</div>
      <div class="mat">
        <div class="setup">
          <div class="stock">
            <h3>Material Setup</h3>
            <button type="button" class="set">Set ...</button>
            <svg width="108" height="58" viewBox="0 0 108 58" font-size="11" font-family="DejaVu Sans Condensed">
              <path d="M23 2h4v14l-2 4-2-4z" fill="#d2c069" stroke="#7c6a2a" />
              <path d="M24 39l4-5h20l4 5-4 4v12H24z" fill="#c07f4b" />
              <path d="M27 31h21l4 8H24z" fill="#e0ac80" />
              <path d="M25 20.500h12.500V34" fill="none" stroke="#c02030" stroke-width="1.5" />
              <path d="M39 20.500h15M39 34.500h15M51.500 22v11M49.500 23.500h4M49.500 31.500h4M51 40.500h13M50 54.500h14M59.500 42v11M57.500 43.500h4M57.500 51.500h4" stroke="#333" fill="none" />
              <circle cx="24" cy="41" r="4" fill="#b81414" /><circle cx="23" cy="40" r="1.500" fill="#ee7a7a" />
              <text x="1" y="45" fill="#222">Z 0</text><text x="57" y="31" fill="#777">6.0mm</text><text x="66" y="52" fill="#777">14.0mm</text>
            </svg>
            <p>Home Pos:   X:0.0 Y:0.0 Z:20.0</p>
          </div>
          <div class="datum">
            <h3>XY Datum</h3>
            <svg width="50" height="33" viewBox="0 0 50 33">
              <defs><linearGradient id="wood" x2="1"><stop offset="0" stop-color="#dba67c" /><stop offset="0.500" stop-color="#c99066" /><stop offset="1" stop-color="#b77d48" /></linearGradient></defs>
              <path d="M16 1h33L36 26H2z" fill="url(#wood)" stroke="#9c6a40" stroke-width="0.7" />
              <circle cx="3.500" cy="26" r="4" fill="#c01616" /><circle cx="2.500" cy="25" r="1.500" fill="#ee7a7a" />
            </svg>
            <p>X: 0.0</p><p>Y: 0.0</p>
          </div>
        </div>
        <div class="ops">
          <h3>Toolpath Operations</h3>
          ${toolRows.map((r) => html`<icon-bar large active="Profile Toolpath" .names=${r} .icons=${toolIcons}></icon-bar>`)}
          <div class="tip" role="tooltip">Profile Toolpath</div>
        </div>
      </div>
      <div class="list">
        <div class="row first">
          <input type="checkbox" id="all" checked /><label for="all">Toolpath List</label>
          <button type="button" class="move push" aria-label="Move up"><svg width="14" height="18" viewBox="0 0 14 18"><path d="M7 1l6 6H9v10H5V7H1z" fill="#e8e8e8" stroke="#a5a5a5" stroke-width="1.5" /></svg></button>
          <button type="button" class="move" aria-label="Move down"><svg width="14" height="18" viewBox="0 0 14 18"><path d="M7 17l6-6H9V1H5v10H1z" fill="#e8e8e8" stroke="#a5a5a5" stroke-width="1.5" /></svg></button>
        </div>
        <div class="row item">
          <input type="checkbox" id="p1" checked />
          <svg width="10" height="15" viewBox="0 0 10 15"><path d="M0 0h3v12h5V0h2v15H0z" fill="#333" /><path d="M3 0h5v12H3z" fill="#ddd" /><path d="M4 1v11M6.500 1v11" stroke="#777" stroke-dasharray="1 1" /></svg>
          <label for="p1">Pocket 1</label>
        </div>
        <div class="row last">
          <input type="checkbox" id="prev" checked /><label for="prev">Show 2D previews</label>
          <input type="checkbox" id="solid" /><label for="solid">Solid</label>
          <button type="button" class="sheetbtn push" aria-label="Toolpath summary"><svg width="9" height="14" viewBox="0 0 9 14"><path d="M0.500 0.500h8v13h-8zM1 4.500h7M1 9.500h7M3 2.500h3M3 7h3M3 11.500h3" fill="none" stroke="#222" /></svg></button>
        </div>
      </div>
    </section>`;
  }

  private task(icon: string, text: string, cls = "") {
    return html`<button type="button" class="task ${cls}"><svg viewBox="0 0 32 32" fill="none">${taskIcons[icon]}</svg>${text}</button>`;
  }

  render() {
    return html`
      <header class="title">
        <svg width="14" height="16" viewBox="2 0 30 32">${vLogo}</svg>
        <h1>VCarve Pro - ShopBot Edition {FabLab Saudi Arabia} - [darfting table]</h1>
        <span class="shade"></span>
        <div class="caps">
          <button type="button" aria-label="Minimize"><svg width="12" height="6"><rect x="0.500" y="1.500" width="11" height="3" fill="#fff" stroke="#444" /></svg></button>
          <button type="button" aria-label="Restore"><svg width="12" height="12"><path d="M3.500 1.500h7v7h-7zM1.500 3.500h7v7h-7z" fill="#999" stroke="#fff" stroke-width="1.500" /></svg></button>
          <button type="button" class="close" aria-label="Close"><svg width="12" height="10"><path d="M2 1l8 8M10 1L2 9" stroke="#fff" stroke-width="2.500" /></svg></button>
        </div>
      </header>
      <nav class="menu">
        ${["File", "Edit", "Toolpaths", "View", "Gadgets", "Help"].map((m) => html`<button type="button">${m}</button>`)}
        <span class="mdi">${this.tree("M1 9h7", "Minimize document")}${this.tree("M3.500 1h6v4h-6zM1 4.500h6v4.500H1z", "Restore document")}${this.tree("M1 1l8 8M9 1L1 9", "Close document")}</span>
      </nav>
      <main>
        ${this.drawingDock()}
        <section class="doc">
          <div class="doctabs">
            <button type="button" class="tab">darfting table</button><button type="button" class="tab alt">3D View</button>
            <span class="nav">${this.tree("M7 1v8L3 5z", "Previous", 9)}${this.tree("M3 1v8l4-4z", "Next", 9)}${this.tree("M1 1l8 8M9 1L1 9", "Close tab", 9)}</span>
          </div>
          <div class="frame"><design-view></design-view></div>
        </section>
        ${this.toolpathDock()}
      </main>
      <footer class="status">
        <span>Ready</span><span>X:1441.7777 Y:1117.8361</span><span>W:807.208</span><span>H:1330.678</span><span>S:3</span>
      </footer>
      <footer class="bar">
        <button type="button" class="orb" aria-label="Start">
          <svg width="38" height="38" viewBox="0 0 38 38">
            <defs><radialGradient id="orb" cy="0.900"><stop offset="0" stop-color="#5fd0ff" /><stop offset="0.500" stop-color="#1f6fae" /><stop offset="1" stop-color="#133a63" /></radialGradient></defs>
            <circle cx="19" cy="19" r="18" fill="url(#orb)" stroke="#88a5bd" />
            <path d="M3 14a17 17 0 0 1 32 0q-16 6-32 0z" fill="#fff" opacity="0.35" />
            <path d="M10 12q4-3 8 0l-1 7q-4-2-8 0z" fill="#f0562a" /><path d="M20 12q4 2 9-1l-2 8q-4 2-8 0z" fill="#8cc63c" /><path d="M9 21q4-2 8 0l-1 7q-4-3-8 0z" fill="#3f9be8" /><path d="M18 21q4 2 8 0l-1 7q-4 3-8 0z" fill="#fbc62c" />
          </svg>
        </button>
        <button type="button" class="pinned" aria-label="Chrome">
          <svg width="28" height="28" viewBox="0 0 28 28"><circle cx="14" cy="14" r="13.500" fill="#f6cd2c" /><path d="M14 .5A13.500 13.500 0 0 0 2.300 7.300L8 17l6-9h12A13.500 13.500 0 0 0 14 .5z" fill="#de3b2c" /><path d="M2.300 7.300A13.500 13.500 0 0 0 13 27.500L19 18l-11 0z" fill="#2ea24c" /><circle cx="14" cy="14" r="6.300" fill="#fff" /><circle cx="14" cy="14" r="5" fill="#3f7fe0" /></svg>
        </button>
        <div class="tasks">
          ${this.task("folder", "darfting table")}${this.task("skype", "Skype")}${this.task("warning", "Optional update ...")}${this.task("vcarve", "VCarve Pro - Sho...", "on")}${this.task("powerpoint", "Camtasia Getting ...")}${this.task("powerpoint", "Presentation2", "joined")}
        </div>
        <div class="tray">
          <span class="lang">EN</span>
          <svg width="8" height="6"><path d="M4 0l4 5H0z" fill="#fff" /></svg>
          <svg width="17" height="18"><path d="M4 1h6v5h1v6l-4 5-4-5V6h1z" fill="#a9adb0" stroke="#666" /><circle cx="11.500" cy="12.500" r="4.500" fill="#24a02c" stroke="#bde6bd" stroke-width="0.7" /><path d="M9.500 12.500l1.500 2 3-3.500" fill="none" stroke="#fff" stroke-width="1.500" /></svg>
          <svg width="17" height="18"><path d="M2 2v15" stroke="#fff" stroke-width="1.500" /><path d="M4 3h5v2h5v7H4z" fill="#f4f4f4" /><circle cx="11" cy="12.500" r="4.500" fill="#d6261c" stroke="#fff" stroke-width="0.7" /><path d="M9 10.500l4 4m0-4l-4 4" stroke="#fff" stroke-width="1.500" /></svg>
          <svg width="17" height="18"><path d="M5 5h10v8H5zM7 16h7M2 1v5h3V1M3.500 6v9" fill="none" stroke="#e8e8e8" stroke-width="1.500" /><path d="M7 8l8 8m0-8l-8 8" stroke="#e01a1a" stroke-width="2.200" /></svg>
          <svg width="17" height="18"><path d="M1 6h3l4-4v14l-4-4H1z" fill="#f4f4f4" /><path d="M10 6.500q2 2.500 0 5M12 4.500q4 4.500 0 9" fill="none" stroke="#ddd" /></svg>
          <time>10:40 AM<br />2/24/2016</time>
          <button type="button" class="desk" aria-label="Show desktop"></button>
        </div>
      </footer>
    `;
  }
}
